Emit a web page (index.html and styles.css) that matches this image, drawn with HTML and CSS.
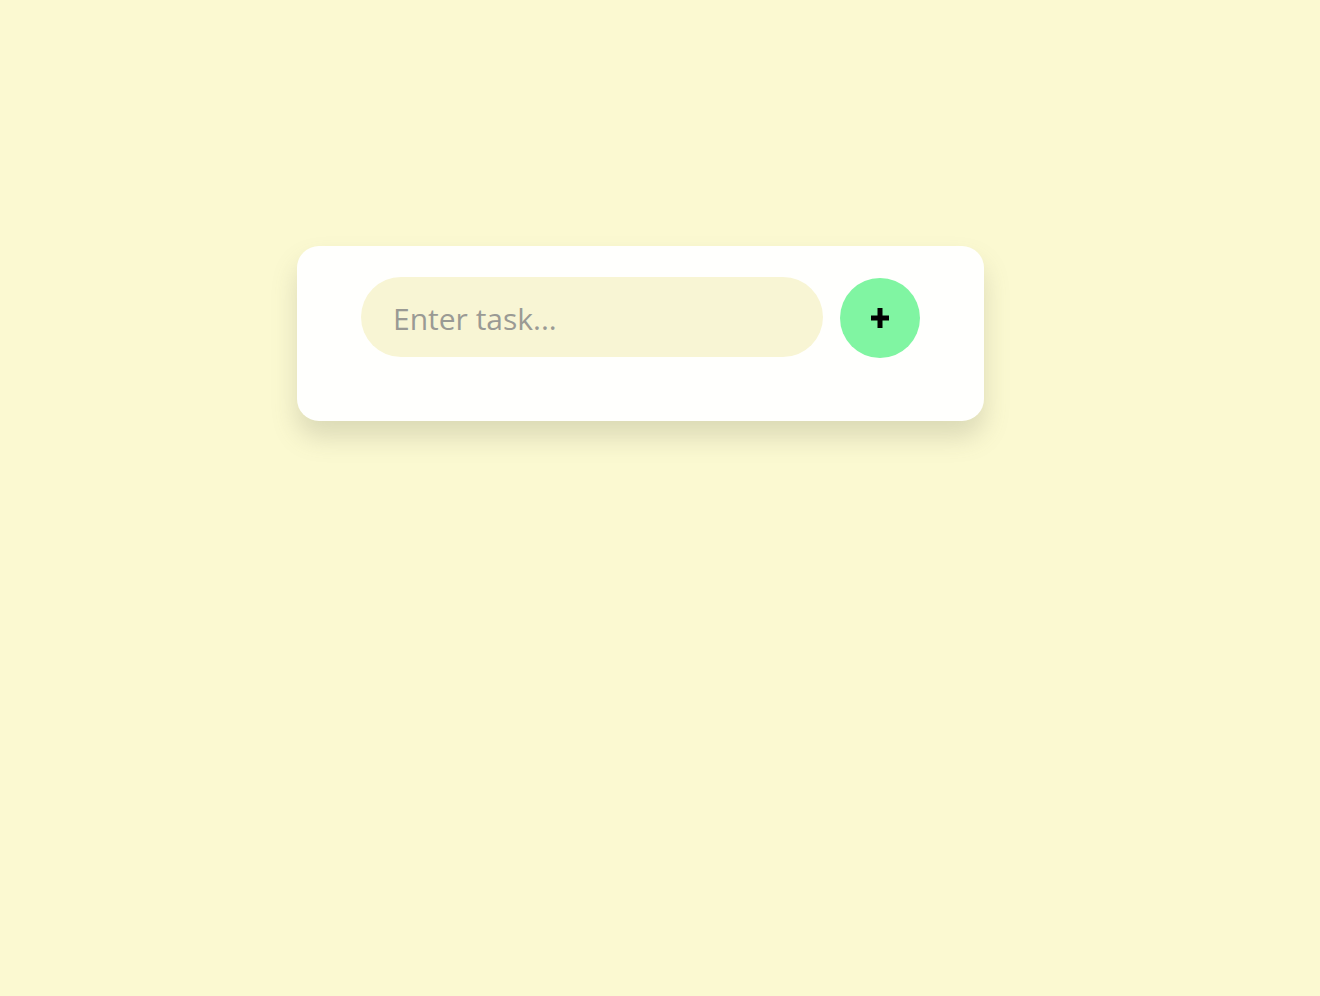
FILE: index.html
```html
<!DOCTYPE html>
<html lang="en">
<head>
<meta charset="utf-8">
<title>Todo</title>
<link rel="stylesheet" href="styles.css">
</head>
<body>
<main class="page">
  <section class="card">
    <form class="task-form">
      <input class="task-input" type="text" placeholder="Enter task...">
      <button class="add-btn" type="button" aria-label="Add task">
        <svg width="18" height="20" viewBox="0 0 18 20"><path d="M9 0v20M0 10h18" stroke="#000" stroke-width="5" fill="none"/></svg>
      </button>
    </form>
  </section>
</main>
</body>
</html>
```
FILE: styles.css
```css
html, body {
  margin: 0;
  padding: 0;
  background: #fbf9d1;
  min-height: 100vh;
  font-family: "Open Sans", "Noto Sans", sans-serif;
}
.page {
  display: flex;
  justify-content: flex-start;
  padding-top: 246px;
  padding-left: 297px;
}
.card {
  width: 687px;
  box-sizing: border-box;
  background: #fffffd;
  border-radius: 22px;
  padding: 31px 64px 63px;
  box-shadow: 0 16px 26px rgba(110, 110, 90, 0.22);
}
.task-form {
  display: flex;
  align-items: flex-start;
  gap: 17px;
}
.task-input {
  flex: 1;
  height: 80px;
  box-sizing: border-box;
  border: none;
  outline: none;
  border-radius: 40px;
  background: #f8f5d4;
  padding: 3px 32px 0;
  font-family: "Open Sans", "Noto Sans", sans-serif;
  font-size: 30px;
  color: #333;
}
.task-input::placeholder {
  color: #9a9a94;
}
.add-btn {
  flex: none;
  width: 80px;
  height: 80px;
  margin-top: 1px;
  border-radius: 50%;
  border: none;
  background: #80f5a2;
  display: flex;
  align-items: center;
  justify-content: center;
  padding: 0;
  cursor: pointer;
}
```
